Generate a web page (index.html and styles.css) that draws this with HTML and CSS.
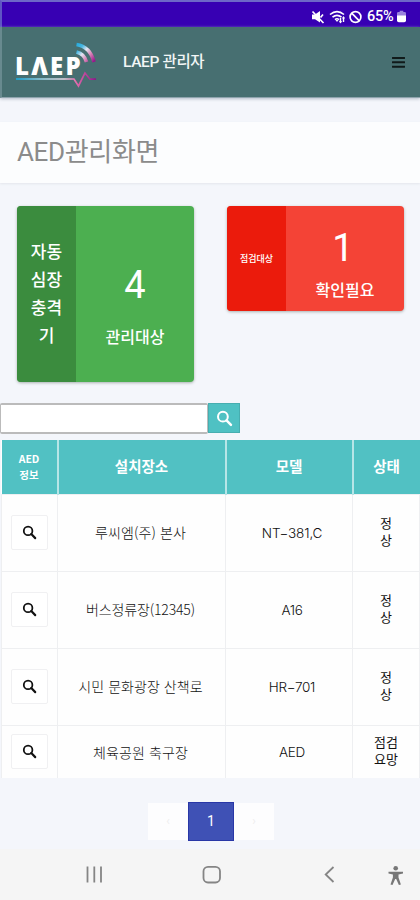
FILE: index.html
```
<!DOCTYPE html>
<html lang="ko">
<head>
<meta charset="utf-8">
<title>LAEP 관리자</title>
<link rel="stylesheet" href="styles.css">
</head>
<body>
<svg class="defs" width="0" height="0" aria-hidden="true">
  <symbol id="search" viewBox="0 0 16 16"><circle cx="6.5" cy="6.3" r="4.6" fill="none" stroke="currentColor" stroke-width="1.9"/><path d="M9.9 9.7 14.1 14" stroke="currentColor" stroke-width="2.3" stroke-linecap="round"/></symbol>
</svg>
<div class="status">
  <svg class="mute" viewBox="0 0 14 14"><path d="M1 4.5h3L9 1v11.500L4 9.200H1z" fill="#fff"/><path d="M1.500 1.500 12.500 13M9.500 7.500 12 4.500" stroke="#fff" stroke-width="1.700"/></svg>
  <svg class="wifi" viewBox="0 0 18 14"><g fill="none" stroke="#fff" stroke-width="1.6"><path d="M1 4.5Q8 -1.2 15 4.5M3.5 7.2Q8 3.4 12.5 7.2M6 9.6Q8 8 10 9.6"/><path d="M11.5 8v5M14.5 7v5" stroke-width="1.4"/></g><path d="M6.5 10h3L8 12zM10 11h3l-1.5 2.5zM13 8.5h3L14.5 6z" fill="#fff"/></svg>
  <svg class="block" viewBox="0 0 14 14"><circle cx="7" cy="7" r="5.4" fill="none" stroke="#fff" stroke-width="1.7"/><path d="m3.2 3.2 7.6 7.6" stroke="#fff" stroke-width="1.7"/></svg>
  <span class="pct">65%</span>
  <svg class="battery" viewBox="0 0 10 13"><path d="M3 0h4v1.5h1.5Q10 1.5 10 3v3H0V3q0-1.500 1.500-1.500H3z" fill="#9a82dc"/><path d="M0 5.500h10v5.500q0 2-2 2H2q-2 0-2-2z" fill="#fff"/></svg>
</div>
<header class="bar">
  <div class="logo" aria-label="LAEP">
    <span class="word">LΛEP</span>
    <svg class="mark" viewBox="0 0 82 46">
      <defs>
        <linearGradient id="arc" x1="60" y1="2" x2="80" y2="20" gradientUnits="userSpaceOnUse"><stop offset="0" stop-color="#18a6dd"/><stop offset=".3" stop-color="#48b7e2"/><stop offset=".5" stop-color="#e5e5f2"/><stop offset=".72" stop-color="#d985b8"/><stop offset="1" stop-color="#96188b"/></linearGradient>
        <linearGradient id="pulse" x1="0" y1="0" x2="80" y2="0" gradientUnits="userSpaceOnUse"><stop offset="0" stop-color="#15aee5"/><stop offset=".35" stop-color="#a7d6e5"/><stop offset=".6" stop-color="#e6d7e4"/><stop offset=".75" stop-color="#e46cac"/><stop offset="1" stop-color="#8c1689"/></linearGradient>
      </defs>
      <g fill="none" stroke="url(#arc)" stroke-width="3.600"><path d="M60.500 5.500Q74 7.500 78 23"/><path d="M60.500 13Q68.500 15 70.500 23"/></g>
      <path d="M0 40h58l4.500 7 6.500-13 5 6.200h6" fill="none" stroke="url(#pulse)" stroke-width="1.700"/>
    </svg>
  </div>
  <span class="brand">LAEP 관리자</span>
  <svg class="menu" viewBox="0 0 13 11"><path d="M.5 1h12M.5 5.300h12M.5 9.700h12" stroke="#101a1a" stroke-width="1.900" stroke-linecap="round"/></svg>
</header>
<div class="heading"><h1>AED관리화면</h1></div>
<main>
  <section class="cards">
    <div class="card green"><div class="side">자동<br>심장<br>충격<br>기</div><div class="info"><b>4</b><span>관리대상</span></div></div>
    <div class="card red"><div class="side">점검대상</div><div class="info"><b>1</b><span>확인필요</span></div></div>
  </section>
  <div class="search"><input type="text" aria-label="검색"><button><svg><use href="#search"/></svg></button></div>
  <table>
    <colgroup><col class="c1"><col class="c2"><col class="c3"><col class="c4"></colgroup>
    <thead><tr><th class="small">AED<br>정보</th><th>설치장소</th><th>모델</th><th>상태</th></tr></thead>
    <tbody>
      <tr><td><span class="look"><svg><use href="#search"/></svg></span></td><td><span class="t t1">루씨엠(주) 본사</span></td><td class="model wide">NT−381,C</td><td class="state">정<br>상</td></tr>
      <tr><td><span class="look"><svg><use href="#search"/></svg></span></td><td><span class="t t2">버스정류장(12345)</span></td><td class="model">A16</td><td class="state">정<br>상</td></tr>
      <tr><td><span class="look"><svg><use href="#search"/></svg></span></td><td><span class="t t3">시민 문화광장 산책로</span></td><td class="model">HR−701</td><td class="state">정<br>상</td></tr>
      <tr class="last"><td><span class="look"><svg><use href="#search"/></svg></span></td><td><span class="t t4">체육공원 축구장</span></td><td class="model">AED</td><td class="state">점검<br>요망</td></tr>
    </tbody>
  </table>
  <div class="pages"><span class="step">‹</span><span class="current">1</span><span class="step">›</span></div>
</main>
<nav>
  <svg viewBox="0 0 420 50" fill="none" stroke="#858585" stroke-width="1.800">
    <path d="M87.500 17.500v16M94.300 17.500v16M101 17.500v16"/>
    <rect x="203.500" y="17.800" width="16.500" height="15.700" rx="4.500"/>
    <path d="m333.500 18-7.800 7.500 7.800 7.500"/>
    <g fill="#777" stroke="none"><circle cx="395.700" cy="19.300" r="2.300"/><path d="M388.500 22.800 403 22.800v1.800l-4.500.8v3l2.400 7-2 .7-2.700-6h-1l-2.700 6-2-.7 2.400-7v-3l-4.400-.8z"/></g>
  </svg>
</nav>
</body>
</html>
```
FILE: styles.css
```
* { box-sizing: border-box; }
body { margin: 0; width: 420px; height: 900px; overflow: hidden; display: flex; flex-direction: column; background: #f4f6fb; font-family: Roboto, "Noto Sans CJK KR", sans-serif; color: #333; }
svg { display: block; flex: none; }
.defs { position: absolute; }
.status { height: 27px; flex: none; background: #3700b3; border-top: 2px solid #6d67c8; border-left: 2px solid #5f55c4; display: flex; align-items: center; justify-content: flex-end; padding: 4px 14px 0 0; color: #fff; }
.mute { width: 14px; height: 14px; margin-right: 4px; }
.wifi { width: 18px; height: 14px; margin-right: 1px; }
.block { width: 15px; height: 14px; margin-right: 4px; }
.pct { font-size: 14.500px; font-weight: 500; line-height: 16px; width: 29px; letter-spacing: -0.3px; margin-right: 1px; }
.battery { width: 9px; height: 13px; }
.bar { height: 71px; flex: none; background: #476f71; border-left: 2px solid #688a8f; border-bottom: 1px solid #8fa4ad; box-shadow: 0 1px 3px #b4bcc9; display: flex; align-items: center; padding: 0 15px 0 14px; }
.logo { position: relative; width: 82px; height: 46px; }
.word { position: absolute; left: -1px; top: 14px; color: #fff; font: 800 24px/25px "Open Sans", sans-serif; letter-spacing: 2.2px; }
.mark { position: absolute; inset: 0; width: 82px; height: 46px; overflow: visible; }
.brand { margin-left: 25px; margin-right: auto; color: #f2f6f6; font: 500 15.500px/24px Roboto, "Noto Sans CJK KR", sans-serif; letter-spacing: -0.35px; }
.menu { width: 13px; height: 11px; }
.heading { height: 61px; flex: none; margin-top: 24px; background: #fcfdfe; box-shadow: 0 1px 2px #e4e6ec; padding: 13px 17px; }
h1 { margin: 0; font: 400 26px/35px Roboto, "Noto Sans CJK KR", sans-serif; color: #8b8b8b; letter-spacing: -0.35px; }
main { flex: 1; display: flex; flex-direction: column; padding-top: 23px; }
.cards { display: flex; align-items: flex-start; gap: 33px; padding: 0 16px 0 17px; height: 197px; flex: none; }
.card { width: 177px; display: flex; border-radius: 4px; overflow: hidden; color: #fff; box-shadow: 0 1px 3px #a9b1b0; }
.green { height: 176px; background: #4caf50; }
.red { height: 105px; background: #f44336; }
.side { width: 59px; flex: none; display: flex; align-items: center; justify-content: center; text-align: center; font-weight: 500; font-size: 17px; line-height: 28px; }
.green .side { background: #3b8c3e; }
.red .side { background: #eb1b0c; font-size: 9px; }
.info { flex: 1; display: flex; flex-direction: column; align-items: center; }
.info b { font-weight: 400; font-size: 38px; line-height: 44px; }
.info span { font-weight: 500; font-size: 16px; line-height: 24px; }
.green .info { padding-top: 57px; }
.green .info span { margin-top: 19px; }
.red .info { padding-top: 20px; }
.red .info b { margin-right: 4px; }
.red .info span { margin-top: 9px; }
.search { display: flex; height: 37px; flex: none; }
input { width: 208px; height: 31px; border: 2px solid #bbb; border-left-width: 1px; border-right-width: 1px; border-radius: 2px; background: #fff; }
button { width: 32px; height: 30px; border: 1px solid #47aeb0; padding: 0; background: #4fc1c3; color: #fff; display: flex; align-items: center; justify-content: center; }
button svg { width: 17px; height: 17px; }
table { width: 418px; margin-left: 1px; table-layout: fixed; border-collapse: collapse; background: #fefefe; font-family: "Noto Sans CJK KR", sans-serif; flex: none; }
.c1 { width: 56px; }
.c2 { width: 168px; }
.c3 { width: 127px; }
.c4 { width: 67px; }
th, td { padding: 0; text-align: center; vertical-align: middle; }
th { height: 54px; background: #51c1c3; color: #fff; font-size: 14.500px; font-weight: 700; line-height: 20px; border-left: 2px solid #b7e5e7; padding-bottom: 2px; }
th:first-child { border-left: 0; }
th.small { font-size: 10.500px; line-height: 16px; padding-bottom: 0; }
td { height: 77px; border: 1px solid #eeeff1; font-size: 14px; font-weight: 300; color: #111; }
td:first-child { padding-right: 1px; }
td:nth-child(2) { padding-right: 2px; padding-bottom: 2px; }
tr.last td:nth-child(2) { padding-bottom: 0; }
td.model { padding-left: 6px; font-family: Inter, "Noto Sans CJK KR", sans-serif; font-size: 13.500px; letter-spacing: -0.3px; }
td.wide { letter-spacing: -0.1px; }
tr.last td { height: 53px; border-bottom: 0; }
.t { display: inline-block; white-space: nowrap; }
.t1 { letter-spacing: 0.1px; }
.t2 { letter-spacing: -0.15px; }
.t3 { letter-spacing: 0.05px; }
.t4 { letter-spacing: 0.1px; }
td.state { font-size: 13px; line-height: 16.500px; font-weight: 400; padding-bottom: 2px; }
.look { width: 37px; height: 35px; margin: 0 auto; border: 1px solid #f0f0f2; border-radius: 2px; background: #fff; display: flex; align-items: center; justify-content: center; }
.look svg { width: 15px; height: 15px; }
.pages { display: flex; align-items: center; margin: 24px 0 0 148px; height: 38px; }
.pages span { display: flex; align-items: center; justify-content: center; }
.step { width: 40px; height: 37px; background: #fdfdfe; color: #eee; font-size: 12px; }
.current { width: 46px; height: 39px; background: #3f51b5; border: 1px solid #2937a7; color: #fff; font-size: 14px; }
nav { height: 51px; flex: none; background: #f5f5f5; }
nav svg { width: 420px; height: 50px; }
```
